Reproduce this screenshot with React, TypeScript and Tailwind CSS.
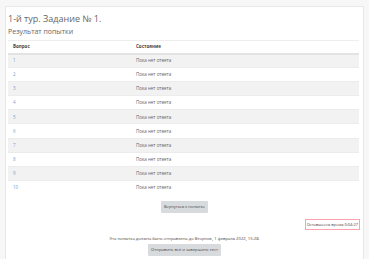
const rows = Array.from({ length: 10 }, (_, i) => i + 1);

export default function App() {
  return (
    <div
      className="h-[259px] overflow-hidden bg-[#f7f7f7] pt-[6px] pl-[5px] pr-[5px] text-[#373a3c]"
      style={{ fontFamily: '"Open Sans", "Liberation Sans", sans-serif' }}
    >
      <div className="h-[260px] border border-[#e8e8e8] bg-white px-[2px]">
        <h2 className="mt-[6px] text-[9px] font-normal leading-[12px] text-[#666]">
          1-й тур. Задание № 1.
        </h2>
        <h3 className="mt-[2px] text-[7px] font-normal leading-[10px] text-[#666]">
          Результат попытки
        </h3>

        <table className="mt-[3px] w-[351px] border-collapse text-[4.5px] text-[#444]">
          <thead>
            <tr className="h-[13px] border-t border-b-2 border-t-[#eee] border-b-[#e3e3e3]">
              <th className="w-[128px] pl-[5px] text-left font-bold">Вопрос</th>
              <th className="text-left font-bold">Состояние</th>
            </tr>
          </thead>
          <tbody>
            {rows.map((n) => (
              <tr
                key={n}
                className={`h-[14.1px] border-t border-[#ececec] ${n % 2 === 1 ? 'bg-[#f2f2f2]' : 'bg-white'}`}
              >
                <td className="pl-[5px] text-[#7e9cc9]">{n}</td>
                <td className="text-[#666]">Пока нет ответа</td>
              </tr>
            ))}
          </tbody>
        </table>

        <div className="mt-[7px] flex justify-center">
          <button className="h-[12px] rounded-[1px] bg-[#d8dbde] px-[3px] text-[4px] text-[#444]">
            Вернуться к попытке
          </button>
        </div>

        <div className="mt-[6px] flex justify-end pr-[1px]">
          <div className="flex h-[11px] items-center px-[2px] text-[4px] text-[#444] ring-1 ring-rose-300 ring-inset">
            Оставшееся время 0:04:27
          </div>
        </div>

        <p className="mt-[6px] text-center text-[4.2px] leading-[6px] text-[#444]">
          Эта попытка должна быть отправлена до Вторник, 1 февраля 2022, 15:28.
        </p>
        <div className="mt-[2px] flex justify-center">
          <button className="h-[12px] rounded-[1px] bg-[#d8dbde] px-[3px] text-[4.2px] text-[#444]">
            Отправить всё и завершить тест
          </button>
        </div>
      </div>
    </div>
  );
}
